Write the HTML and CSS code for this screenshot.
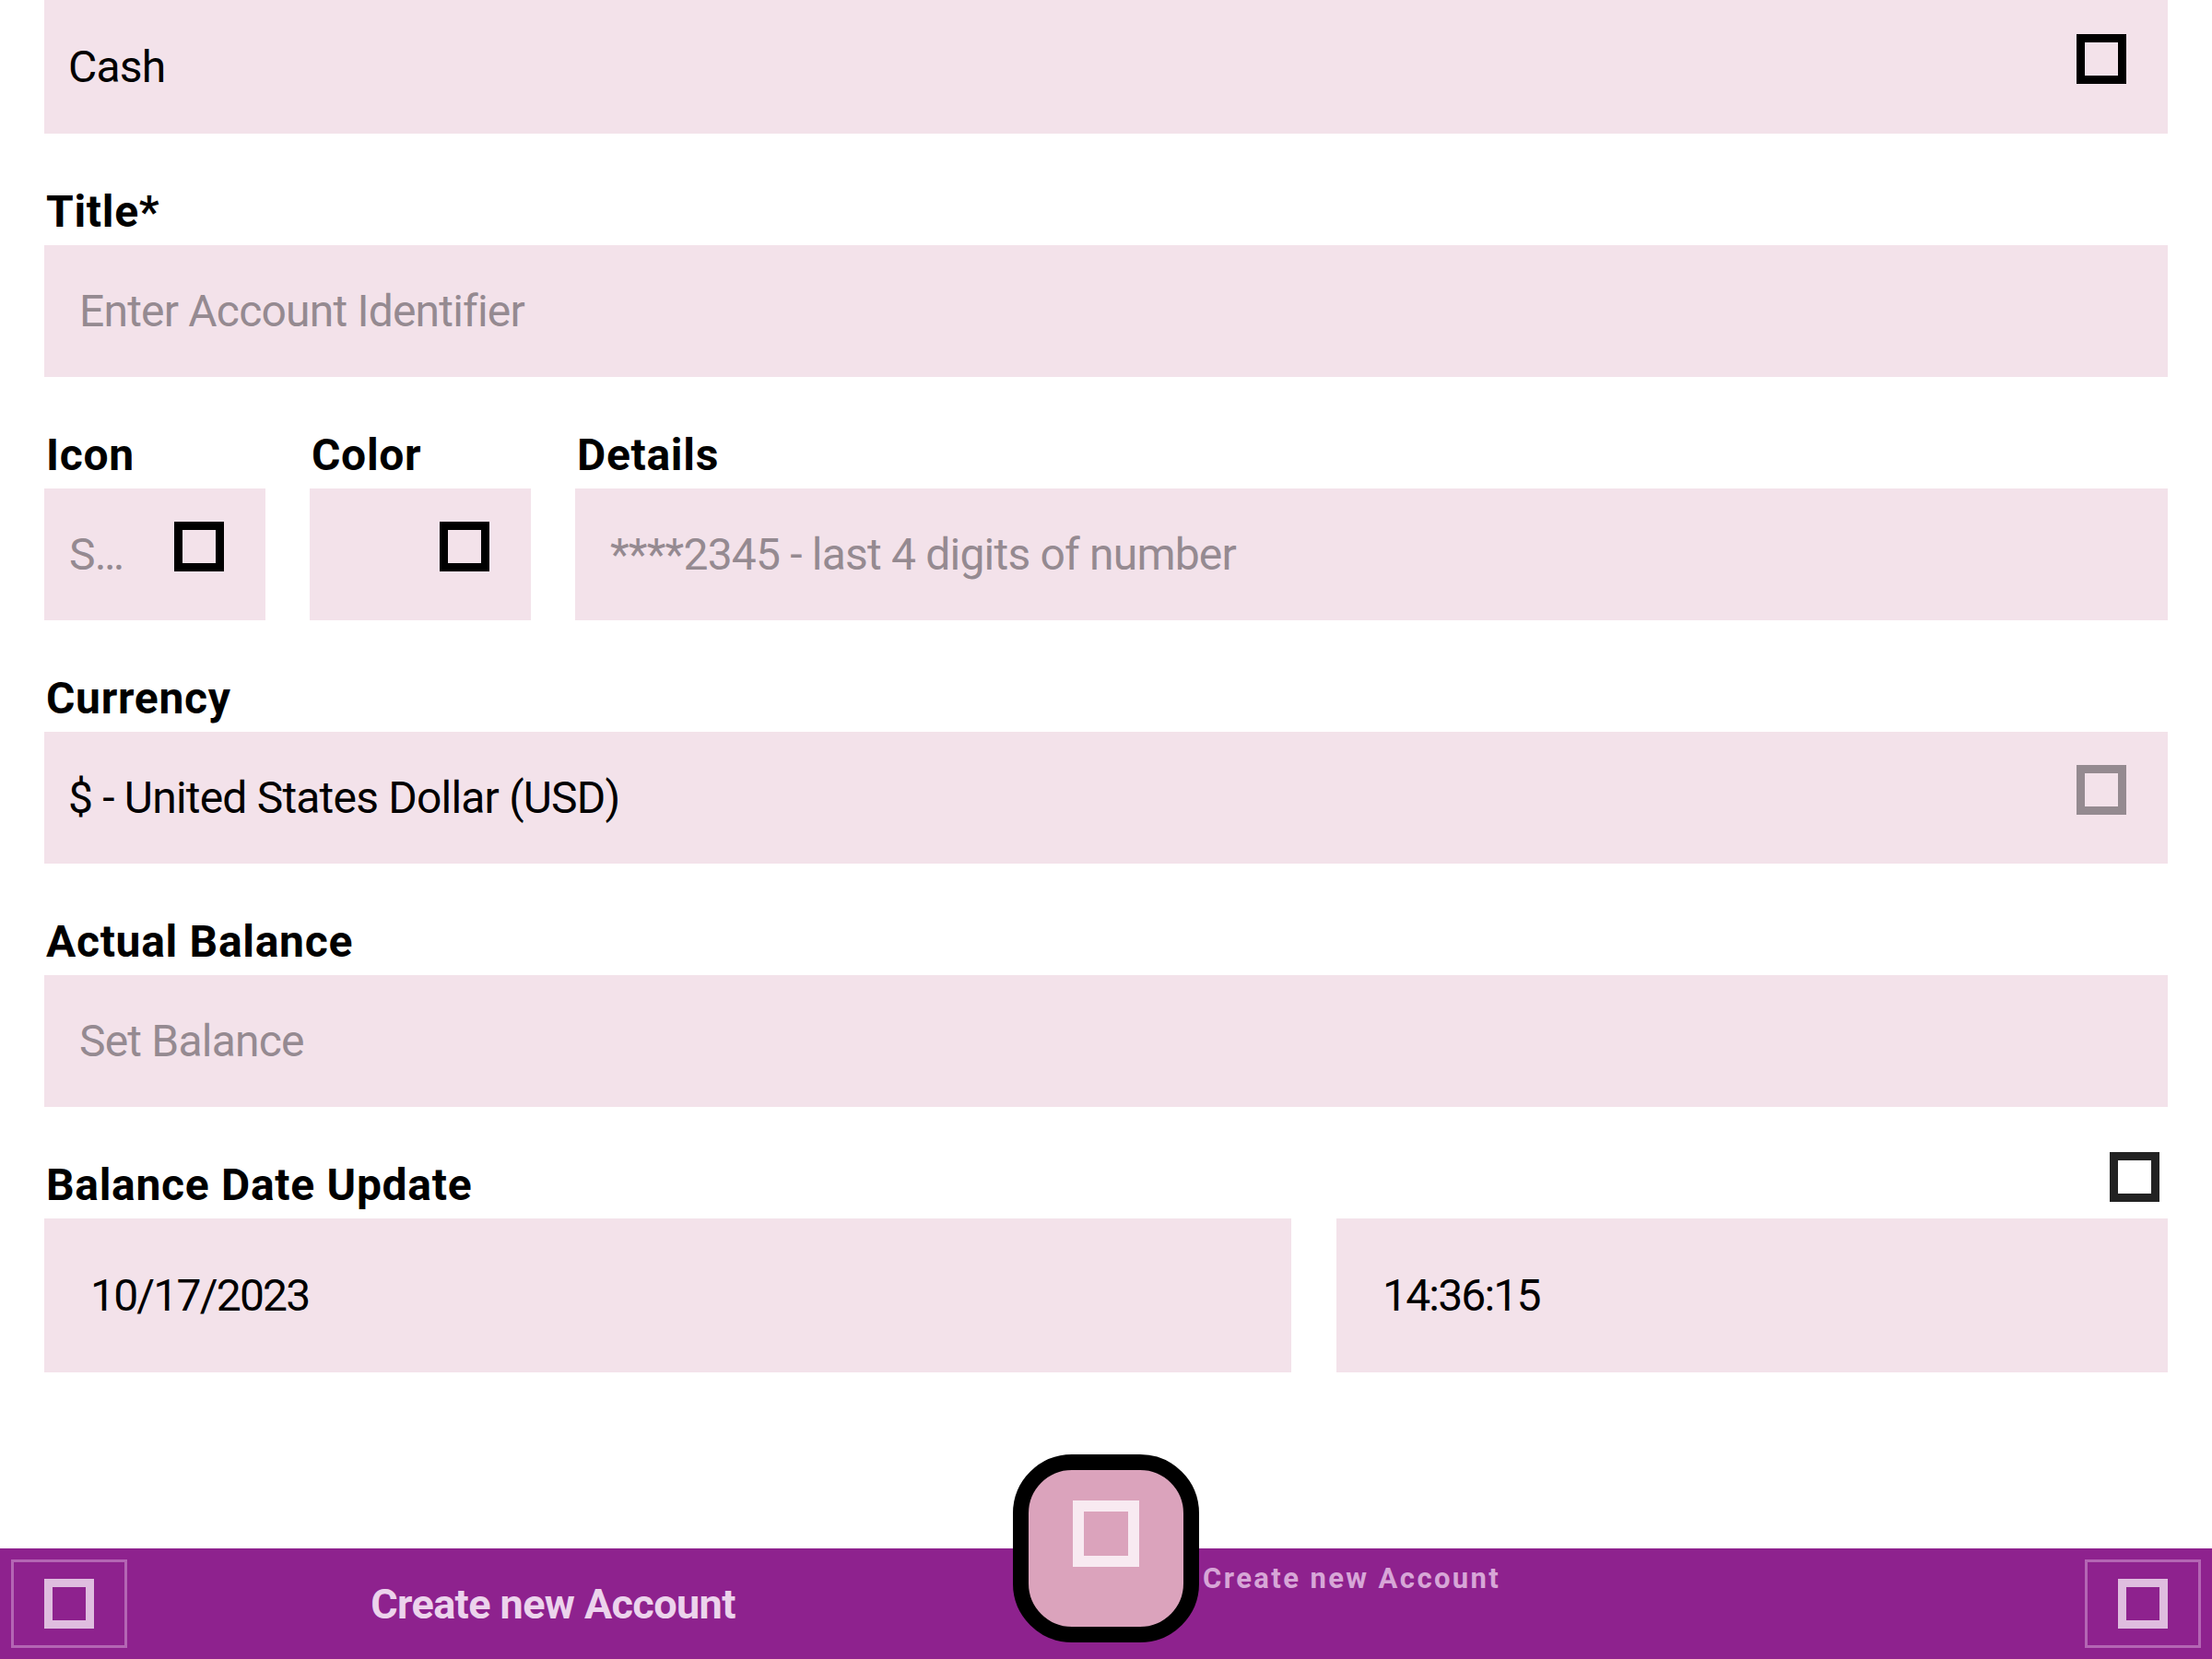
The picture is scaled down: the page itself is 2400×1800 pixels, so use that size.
FILE: index.html
```html
<!DOCTYPE html>
<html lang="en">
<head>
<meta charset="utf-8">
<title>Create new Account</title>
<link rel="stylesheet" href="styles.css">
</head>
<body>
<div class="screen">
  <main class="form">
    <div class="field select first">
      <span class="txt value">Cash</span>
      <span class="chk"></span>
    </div>

    <section class="group">
      <div class="lbl"><span class="txt">Title*</span></div>
      <div class="field input"><span class="txt ph">Enter Account Identifier</span></div>
    </section>

    <div class="row3">
      <section class="group small">
        <div class="lbl"><span class="txt">Icon</span></div>
        <div class="field select mini"><span class="txt ph">S…</span><span class="chk"></span></div>
      </section>
      <section class="group small">
        <div class="lbl"><span class="txt">Color</span></div>
        <div class="field select mini end"><span class="chk"></span></div>
      </section>
      <section class="group grow">
        <div class="lbl"><span class="txt">Details</span></div>
        <div class="field input"><span class="txt ph">****2345 - last 4 digits of number</span></div>
      </section>
    </div>

    <section class="group">
      <div class="lbl"><span class="txt">Currency</span></div>
      <div class="field select">
        <span class="txt value">$ - United States Dollar (USD)</span>
        <span class="chk grey"></span>
      </div>
    </section>

    <section class="group">
      <div class="lbl"><span class="txt">Actual Balance</span></div>
      <div class="field input"><span class="txt ph">Set Balance</span></div>
    </section>

    <section class="group">
      <div class="lbl lbl-row"><span class="txt">Balance Date Update</span><span class="chk dark"></span></div>
      <div class="date-row">
        <div class="field tall date"><span class="txt value">10/17/2023</span></div>
        <div class="field tall time"><span class="txt value">14:36:15</span></div>
      </div>
    </section>
  </main>

  <nav class="bar">
    <div class="bar-half left">
      <span class="bar-btn"><span class="chk light"></span></span>
      <span class="bar-title">Create new Account</span>
    </div>
    <div class="bar-half right">
      <span class="bar-sub">Create new Account</span>
      <span class="bar-btn"><span class="chk light"></span></span>
    </div>
  </nav>

  <button class="fab" type="button"><span class="fab-icon"></span></button>
</div>
</body>
</html>
```
FILE: styles.css
```css
* { box-sizing: border-box; }

html, body {
  margin: 0;
  padding: 0;
  background: #ffffff;
}

body {
  font-family: Roboto, "Noto Sans", sans-serif;
  color: #000;
}

.screen {
  position: relative;
  width: 2400px;
  height: 1800px;
  overflow: hidden;
  display: flex;
  flex-direction: column;
}

.form {
  flex: 1;
  padding: 0 48px;
  display: flex;
  flex-direction: column;
}

.field {
  height: 143px;
  background: #f3e2ea;
  display: flex;
  align-items: center;
  font-size: 48px;
  line-height: 56px;
  letter-spacing: -0.8px;
}

.field.first { height: 145px; }

.field.select {
  padding: 0 45px 0 26px;
  justify-content: space-between;
}

.field.input {
  padding: 0 36px 0 38px;
}

.field.mini {
  padding: 0 45px 0 27px;
}
.field.mini.end { justify-content: flex-end; }

.field.tall {
  height: 167px;
  padding: 0 50px;
  letter-spacing: -1.8px;
}

.txt {
  display: inline-block;
  white-space: nowrap;
}

.value { color: #000; }
.ph { color: #958a91; }

.group {
  display: flex;
  flex-direction: column;
  margin-top: 57px;
}

.lbl {
  font-size: 48px;
  line-height: 56px;
  font-weight: 700;
  letter-spacing: 0.7px;
  margin-bottom: 8px;
  padding-left: 2px;
}

.lbl-row {
  display: flex;
  justify-content: space-between;
  align-items: flex-start;
  padding-right: 9px;
}

.chk {
  display: inline-block;
  width: 54px;
  height: 54px;
  border: 9px solid #000;
  flex: none;
}
.field .chk { margin-bottom: 18px; }
.chk.grey { border-color: #948a90; }
.chk.dark { border-color: #222222; margin-top: -8px; }
.chk.light { border-color: #dfbddf; }

.row3 {
  display: flex;
  gap: 48px;
}
.row3 .group.small { width: 240px; flex: none; }
.row3 .group.grow { flex: 1; }

.date-row {
  display: flex;
  gap: 49px;
}
.date-row .date { flex: none; width: calc((100% - 49px) * 0.6); }
.date-row .time { flex: none; width: calc((100% - 49px) * 0.4); }

/* bottom bar */
.bar {
  height: 120px;
  background: #8e228e;
  display: flex;
}

.bar-half {
  flex: 1;
  display: flex;
  align-items: center;
}

.bar-btn {
  width: 126px;
  height: 96px;
  border: 3px solid #b466b4;
  display: flex;
  align-items: center;
  justify-content: center;
  flex: none;
}

.bar-half.left { padding-left: 12px; }
.bar-half.right { padding-right: 12px; justify-content: space-between; }

.bar-title {
  flex: 1;
  text-align: center;
  padding-right: 138px;
  font-size: 45px;
  font-weight: 700;
  color: #ecd3ec;
  letter-spacing: -0.6px;
}

.bar-sub {
  align-self: flex-start;
  margin-top: 14px;
  margin-left: 105px;
  font-size: 31px;
  font-weight: 700;
  letter-spacing: 2.4px;
  color: #d7a6d7;
}

.fab {
  position: absolute;
  left: 1099px;
  top: 1578px;
  width: 202px;
  height: 204px;
  padding: 0;
  border: 17px solid #000;
  border-radius: 64px;
  background: #dba3bc;
  display: flex;
  align-items: center;
  justify-content: center;
}

.fab-icon {
  width: 72px;
  height: 72px;
  border: 12px solid #f8eaf1;
  margin-top: -32px;
}
```
